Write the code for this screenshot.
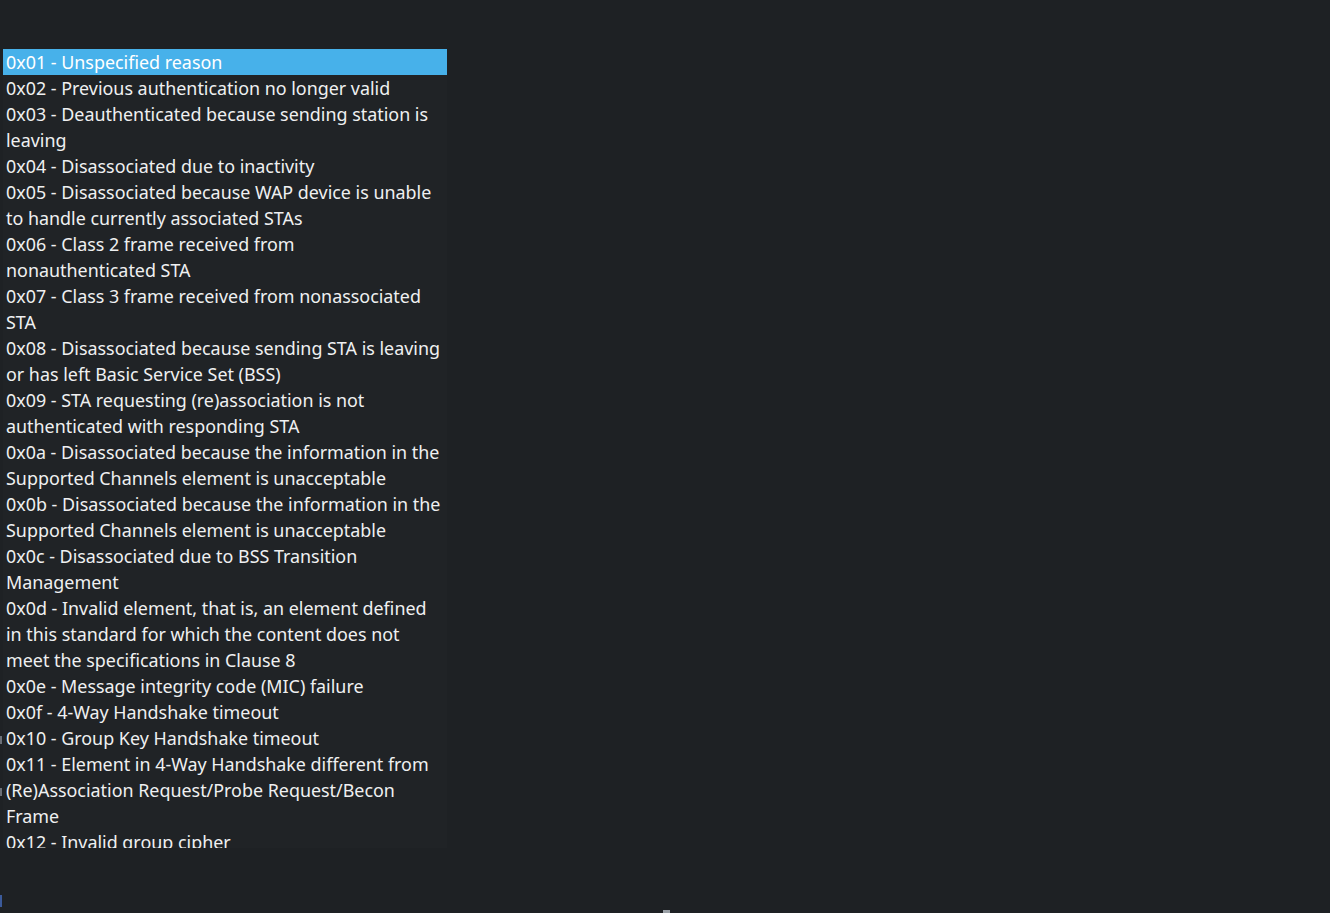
import React from "react";

const REASONS = [
  "0x01 - Unspecified reason",
  "0x02 - Previous authentication no longer valid",
  "0x03 - Deauthenticated because sending station is leaving",
  "0x04 - Disassociated due to inactivity",
  "0x05 - Disassociated because WAP device is unable to handle currently associated STAs",
  "0x06 - Class 2 frame received from nonauthenticated STA",
  "0x07 - Class 3 frame received from nonassociated STA",
  "0x08 - Disassociated because sending STA is leaving or has left Basic Service Set (BSS)",
  "0x09 - STA requesting (re)association is not authenticated with responding STA",
  "0x0a - Disassociated because the information in the Supported Channels element is unacceptable",
  "0x0b - Disassociated because the information in the Supported Channels element is unacceptable",
  "0x0c - Disassociated due to BSS Transition Management",
  "0x0d - Invalid element, that is, an element defined in this standard for which the content does not meet the specifications in Clause 8",
  "0x0e - Message integrity code (MIC) failure",
  "0x0f - 4-Way Handshake timeout",
  "0x10 - Group Key Handshake timeout",
  "0x11 - Element in 4-Way Handshake different from (Re)Association Request/Probe Request/Becon Frame",
  "0x12 - Invalid group cipher",
];

export default function App() {
  const selected = 0;

  return (
    <div
      className="relative w-[1330px] h-[913px] overflow-hidden bg-[#1e2124] text-[#eff0f1] pt-[49px] pl-[3px]"
      style={{ fontFamily: '"Noto Sans", "Open Sans", sans-serif' }}
    >
      {/* reason code list, clipped like a scroll view */}
      <div className="w-[444px] h-[799px] overflow-hidden bg-[#202326]">
        {REASONS.map((text, i) => (
          <div
            key={text}
            className={
              i === selected
                ? "bg-[#47b1ea] text-white pl-[3px] pr-[2px] text-[17.9px] leading-[26px]"
                : "pl-[3px] pr-[2px] text-[17.9px] leading-[26px]"
            }
          >
            {text}
          </div>
        ))}
      </div>

      {/* small edge marks */}
      <div className="absolute left-0 top-[736px] w-[2px] h-[8px] bg-[#6b7078]" />
      <div className="absolute left-0 top-[788px] w-[2px] h-[8px] bg-[#6b7078]" />
      <div className="absolute left-0 top-[895px] w-[2px] h-[12px] bg-[#3b5a9a]" />
      <div className="absolute left-[663px] top-[910px] w-[7px] h-[3px] bg-[#9aa0a6]" />
    </div>
  );
}
